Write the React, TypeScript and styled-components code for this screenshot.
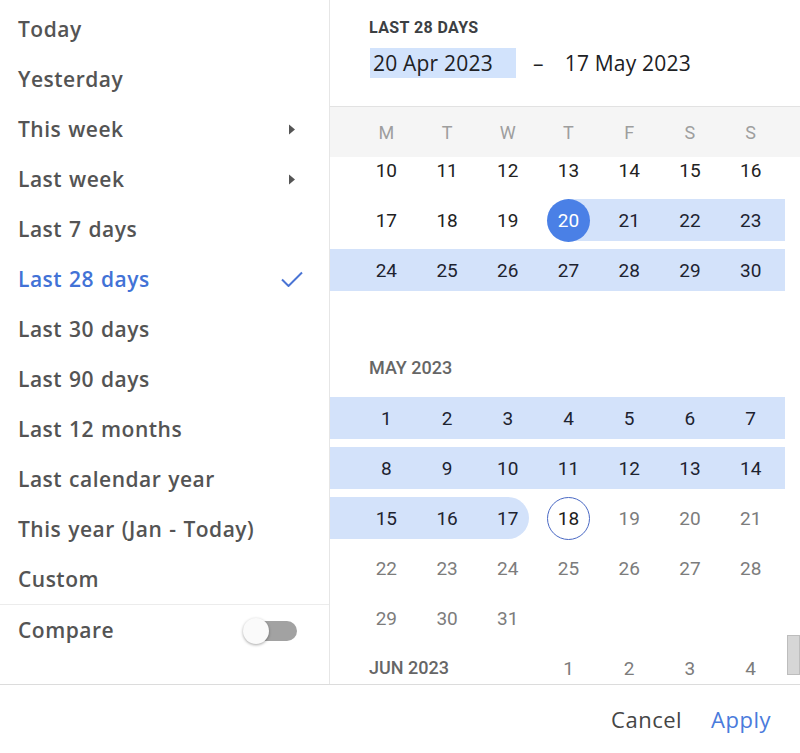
import React, { useLayoutEffect, useRef } from 'react';
import styled, { createGlobalStyle, css } from 'styled-components';

const GlobalStyle = createGlobalStyle`
  html, body { margin: 0; padding: 0; background: #fff; }
  body { font-family: Roboto, "Liberation Sans", sans-serif; }
  * { box-sizing: border-box; }
`;

const Frame = styled.div`
  width: 800px;
  height: 753px;
  display: flex;
  flex-direction: column;
  background: #fff;
  overflow: hidden;
`;

const Main = styled.div`
  display: flex;
  height: 685px;
  border-bottom: 1px solid #dcdcdc;
`;

const Sidebar = styled.div`
  width: 330px;
  flex: none;
  display: flex;
  flex-direction: column;
  border-right: 1px solid #e6e6e6;
`;

const MenuList = styled.div`
  display: flex;
  flex-direction: column;
  padding-top: 4px;
`;

const MenuItem = styled.div<{ $active?: boolean }>`
  height: 50px;
  display: flex;
  align-items: center;
  justify-content: space-between;
  padding: 0 26px 0 18px;
  font-family: "Open Sans", sans-serif;
  font-size: 21px;
  font-weight: 600;
  letter-spacing: 0.5px;
  word-spacing: 1px;
  color: ${(p) => (p.$active ? '#4272d6' : '#545454')};
`;

const IconSlot = styled.span`
  width: 22px;
  height: 16px;
  display: flex;
  align-items: center;
  justify-content: center;
`;

const CompareRow = styled.div`
  border-top: 1px solid #ececec;
  height: 50px;
  display: flex;
  align-items: center;
  justify-content: space-between;
  padding: 0 32px 0 18px;
  font-family: "Open Sans", sans-serif;
  font-size: 21px;
  font-weight: 600;
  letter-spacing: 0.5px;
  color: #545454;
`;

const Switch = styled.span`
  position: relative;
  width: 54px;
  height: 28px;
  display: flex;
  align-items: center;
  justify-content: flex-end;
  margin-top: 3px;
`;

const SwitchTrack = styled.span`
  width: 44px;
  height: 20px;
  border-radius: 10px;
  background: #a2a2a2;
`;

const SwitchKnob = styled.span`
  position: absolute;
  left: 0;
  top: 1px;
  width: 26px;
  height: 26px;
  border-radius: 50%;
  background: #fafafa;
  box-shadow: 0 1px 3px rgba(0, 0, 0, 0.35);
`;

const CalendarPanel = styled.div`
  flex: 1;
  min-width: 0;
  display: flex;
  flex-direction: column;
`;

const RangeHeader = styled.div`
  height: 106px;
  flex: none;
  padding: 18px 0 0 39px;
  display: flex;
  flex-direction: column;
  gap: 11px;
`;

const RangeLabel = styled.div`
  font-size: 16px;
  line-height: 19px;
  font-weight: 700;
  color: #3c4043;
  letter-spacing: 0.4px;
`;

const DateRow = styled.div`
  display: flex;
  align-items: center;
  height: 30px;
  font-family: "Open Sans", sans-serif;
  font-size: 21px;
  letter-spacing: 0.2px;
  color: #202124;
`;

const DateField = styled.span<{ $focused?: boolean }>`
  display: flex;
  align-items: center;
  height: 30px;
  padding: 0 3px;
  ${(p) =>
    p.$focused &&
    css`
      width: 146px;
      margin-left: 1px;
      background: #d2e3fc;
    `}
`;

const Dash = styled.span`
  margin: 0 18px 0 17px;
`;

const WeekHeader = styled.div`
  height: 51px;
  flex: none;
  border-top: 1px solid #e2e2e2;
  background: #f5f5f5;
  display: grid;
  grid-template-columns: repeat(7, 1fr);
  padding: 0 19px 0 26px;
  align-items: center;
`;

const WeekDay = styled.span`
  text-align: center;
  font-size: 18px;
  color: #9e9e9e;
`;

const CalendarBody = styled.div`
  flex: 1;
  min-height: 0;
  display: flex;
`;

const ScrollArea = styled.div`
  position: relative;
  flex: 1;
  min-width: 0;
  overflow-y: scroll;
  scrollbar-width: none;
  &::-webkit-scrollbar {
    display: none;
  }
`;

const ScrollTrack = styled.div`
  width: 15px;
  flex: none;
  padding-left: 2px;
`;

const ScrollThumb = styled.div`
  height: 40px;
  margin-top: 478px;
  background: #d6d6d6;
  border: 1px solid #bdbdbd;
`;

const MonthTitleRow = styled.div`
  height: 98px;
  display: flex;
  align-items: flex-end;
  padding-left: 39px;
`;

const MonthTitle = styled.span<{ $inline?: boolean }>`
  font-size: 18px;
  line-height: 50px;
  font-weight: 500;
  color: #666;
  white-space: nowrap;
  ${(p) =>
    p.$inline &&
    css`
      justify-self: start;
      margin-left: 13px;
    `}
`;

const WeekRow = styled.div`
  display: grid;
  grid-template-columns: repeat(7, 1fr);
  padding: 0 4px 0 26px;
  height: 50px;
`;

type Band = 'none' | 'full' | 'start' | 'end';
type Tone = 'past' | 'range' | 'future';

const DayCell = styled.div<{ $band: Band; $col: number }>`
  position: relative;
  height: 50px;
  display: flex;
  align-items: center;
  justify-content: center;
  ${(p) =>
    p.$band !== 'none' &&
    css`
      &::before {
        content: '';
        position: absolute;
        top: 4px;
        bottom: 4px;
        left: ${p.$band === 'start' ? '50%' : p.$col === 0 ? '-26px' : '0'};
        right: ${p.$band === 'end' ? 'calc(50% - 21px)' : p.$col === 6 ? '-4px' : '0'};
        background: #d3e2fa;
        border-radius: ${p.$band === 'end' ? '0 21px 21px 0' : '0'};
      }
    `}
`;

const DayNum = styled.span<{ $tone: Tone; $selected?: boolean; $today?: boolean }>`
  position: relative;
  z-index: 1;
  width: 43px;
  height: 43px;
  border-radius: 50%;
  display: flex;
  align-items: center;
  justify-content: center;
  font-size: 19px;
  color: ${(p) => (p.$tone === 'future' ? '#7c7c7c' : p.$tone === 'range' ? '#1d2330' : '#222')};
  ${(p) =>
    p.$selected &&
    css`
      background: #4a80e6;
      color: #fff;
    `}
  ${(p) =>
    p.$today &&
    css`
      border: 1.5px solid #4a69c4;
      color: #1d1d1d;
    `}
`;

const Footer = styled.div`
  flex: 1;
  display: flex;
  align-items: center;
  justify-content: flex-end;
  gap: 29px;
  padding-right: 29px;
`;

const FooterButton = styled.button<{ $primary?: boolean }>`
  border: none;
  background: none;
  padding: 0;
  font-family: "Open Sans", sans-serif;
  font-size: 22px;
  letter-spacing: 0.5px;
  color: ${(p) => (p.$primary ? '#4a7bdc' : '#454545')};
  cursor: pointer;
`;

const Arrow = () => (
  <svg width="8" height="11" viewBox="0 0 8 11">
    <path d="M1 0.5 L7 5.5 L1 10.5 Z" fill="#555" />
  </svg>
);

const Check = () => (
  <svg width="22" height="16" viewBox="0 0 22 16">
    <path d="M1 8.5 L7.5 15 L21 1.5" fill="none" stroke="#4a74d4" strokeWidth="2" />
  </svg>
);

const presets: { label: string; arrow?: boolean; active?: boolean }[] = [
  { label: 'Today' },
  { label: 'Yesterday' },
  { label: 'This week', arrow: true },
  { label: 'Last week', arrow: true },
  { label: 'Last 7 days' },
  { label: 'Last 28 days', active: true },
  { label: 'Last 30 days' },
  { label: 'Last 90 days' },
  { label: 'Last 12 months' },
  { label: 'Last calendar year' },
  { label: 'This year (Jan - Today)' },
  { label: 'Custom' },
];

const MONTHS = ['JAN', 'FEB', 'MAR', 'APR', 'MAY', 'JUN', 'JUL', 'AUG', 'SEP', 'OCT', 'NOV', 'DEC'];
const key = (y: number, m: number, d: number) => y * 10000 + m * 100 + d;
const RANGE_START = key(2023, 3, 20);
const RANGE_END = key(2023, 4, 17);
const TODAY = key(2023, 4, 18);
const ANCHOR = key(2023, 3, 10);

function buildMonth(y: number, m: number) {
  const offset = (new Date(y, m, 1).getDay() + 6) % 7;
  const days = new Date(y, m + 1, 0).getDate();
  const weeks: (number | null)[][] = [];
  let week: (number | null)[] = Array(offset).fill(null);
  for (let d = 1; d <= days; d++) {
    week.push(d);
    if (week.length === 7) {
      weeks.push(week);
      week = [];
    }
  }
  if (week.length) {
    while (week.length < 7) week.push(null);
    weeks.push(week);
  }
  return { offset, weeks };
}

const monthList = [
  { y: 2023, m: 3 },
  { y: 2023, m: 4 },
  { y: 2023, m: 5 },
];

function bandFor(k: number): Band {
  if (k < RANGE_START || k > RANGE_END) return 'none';
  if (k === RANGE_START) return 'start';
  if (k === RANGE_END) return 'end';
  return 'full';
}

function toneFor(k: number): Tone {
  if (k > RANGE_END) return 'future';
  if (k >= RANGE_START) return 'range';
  return 'past';
}

const Month: React.FC<{ y: number; m: number; anchorRef: React.RefObject<HTMLDivElement | null> }> = ({
  y,
  m,
  anchorRef,
}) => {
  const { offset, weeks } = buildMonth(y, m);
  const title = `${MONTHS[m]} ${y}`;
  const inline = offset >= 2;
  return (
    <>
      {!inline && (
        <MonthTitleRow>
          <MonthTitle>{title}</MonthTitle>
        </MonthTitleRow>
      )}
      {weeks.map((week, wi) => {
        const hasAnchor = week.some((d) => d !== null && key(y, m, d) === ANCHOR);
        return (
          <WeekRow key={wi} ref={hasAnchor ? anchorRef : undefined}>
            {wi === 0 && inline && (
              <MonthTitle $inline style={{ gridColumn: `1 / span ${offset}` }}>
                {title}
              </MonthTitle>
            )}
            {week.map((d, ci) => {
              if (d === null) {
                if (wi === 0 && inline) return null;
                return <DayCell key={ci} $band="none" $col={ci} />;
              }
              const k = key(y, m, d);
              return (
                <DayCell key={ci} $band={bandFor(k)} $col={ci}>
                  <DayNum $tone={toneFor(k)} $selected={k === RANGE_START} $today={k === TODAY}>
                    {d}
                  </DayNum>
                </DayCell>
              );
            })}
          </WeekRow>
        );
      })}
    </>
  );
};

export default function App() {
  const scrollRef = useRef<HTMLDivElement>(null);
  const anchorRef = useRef<HTMLDivElement>(null);

  useLayoutEffect(() => {
    if (scrollRef.current && anchorRef.current) {
      scrollRef.current.scrollTop = anchorRef.current.offsetTop + 12;
    }
  }, []);

  return (
    <>
      <GlobalStyle />
      <Frame>
        <Main>
          <Sidebar>
            <MenuList>
              {presets.map((p) => (
                <MenuItem key={p.label} $active={p.active}>
                  <span>{p.label}</span>
                  {(p.arrow || p.active) && <IconSlot>{p.active ? <Check /> : <Arrow />}</IconSlot>}
                </MenuItem>
              ))}
            </MenuList>
            <CompareRow>
              <span>Compare</span>
              <Switch>
                <SwitchTrack />
                <SwitchKnob />
              </Switch>
            </CompareRow>
          </Sidebar>
          <CalendarPanel>
            <RangeHeader>
              <RangeLabel>LAST 28 DAYS</RangeLabel>
              <DateRow>
                <DateField $focused>20 Apr 2023</DateField>
                <Dash>–</Dash>
                <DateField>17 May 2023</DateField>
              </DateRow>
            </RangeHeader>
            <WeekHeader>
              {['M', 'T', 'W', 'T', 'F', 'S', 'S'].map((d, i) => (
                <WeekDay key={i}>{d}</WeekDay>
              ))}
            </WeekHeader>
            <CalendarBody>
              <ScrollArea ref={scrollRef}>
                {monthList.map(({ y, m }) => (
                  <Month key={`${y}-${m}`} y={y} m={m} anchorRef={anchorRef} />
                ))}
              </ScrollArea>
              <ScrollTrack>
                <ScrollThumb />
              </ScrollTrack>
            </CalendarBody>
          </CalendarPanel>
        </Main>
        <Footer>
          <FooterButton>Cancel</FooterButton>
          <FooterButton $primary>Apply</FooterButton>
        </Footer>
      </Frame>
    </>
  );
}
